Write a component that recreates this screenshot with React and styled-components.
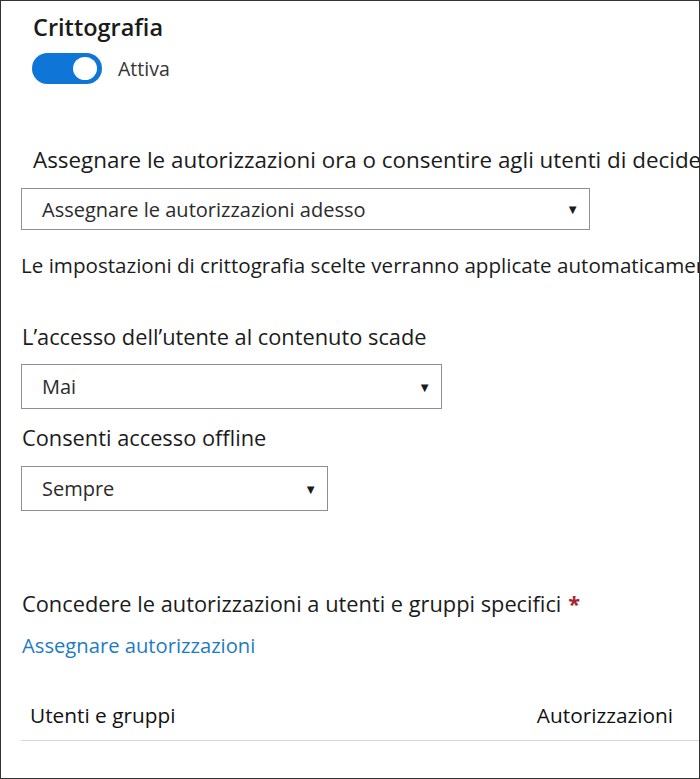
import React, { useState } from 'react';
import styled, { createGlobalStyle } from 'styled-components';

const GlobalStyle = createGlobalStyle`
  html, body {
    margin: 0;
    padding: 0;
    background: #ffffff;
  }
  body {
    font-family: 'Open Sans', 'Noto Sans', 'Liberation Sans', sans-serif;
    color: #1b1b1b;
  }
`;

const Frame = styled.div`
  box-sizing: border-box;
  width: 700px;
  height: 779px;
  border: 1px solid #333333;
  overflow: hidden;
  padding: 11px 0 0 20px;
  white-space: nowrap;
`;

const Heading = styled.h2`
  margin: 0 0 0 12px;
  font-size: 23.5px;
  line-height: 30px;
  font-weight: 600;
  color: #1b1b1b;
`;

const ToggleRow = styled.div`
  display: flex;
  align-items: center;
  gap: 16px;
  margin: 11px 0 0 11px;
`;

const Track = styled.button`
  position: relative;
  width: 70px;
  height: 31px;
  border: none;
  border-radius: 16px;
  padding: 0;
  background: ${(p) => (p.$on ? '#0f76d8' : '#c8c6c4')};
  cursor: pointer;
`;

const Knob = styled.span`
  position: absolute;
  top: 4px;
  left: ${(p) => (p.$on ? '41px' : '5px')};
  width: 24px;
  height: 23px;
  border-radius: 50%;
  background: #ffffff;
`;

const ToggleText = styled.span`
  font-size: 19.5px;
  color: #333333;
`;

const Label = styled.div`
  margin: ${(p) => p.$mt}px 0 0 ${(p) => p.$ml || 1}px;
  font-size: ${(p) => p.$size || 21.8}px;
  line-height: 26px;
  color: #1b1b1b;
`;

const Required = styled.span`
  color: #a4262c;
  font-weight: 700;
  margin-left: 7px;
`;

const Select = styled.div`
  box-sizing: border-box;
  display: flex;
  align-items: center;
  justify-content: space-between;
  width: ${(p) => p.$w}px;
  height: ${(p) => p.$h}px;
  margin-top: ${(p) => p.$mt}px;
  padding: 0 10px 0 20px;
  border: 1px solid #8f8f8f;
  background: #ffffff;
  font-size: 20px;
  color: #2b2b2b;
`;

const Caret = styled.span`
  font-size: 13px;
  color: #1b1b1b;
`;

const Info = styled.div`
  margin-top: 23px;
  font-size: 20.6px;
  line-height: 24px;
  color: #1b1b1b;
`;

const Link = styled.a`
  display: block;
  margin: 16px 0 0 1px;
  font-size: 20.2px;
  line-height: 24px;
  color: #1c7bc4;
  text-decoration: none;
`;

const TableHead = styled.div`
  display: flex;
  justify-content: space-between;
  width: 679px;
  box-sizing: border-box;
  margin-top: 45px;
  padding: 0 27px 12px 9px;
  border-bottom: 1px solid #d6d6d6;
  font-size: 20.8px;
  line-height: 26px;
  font-weight: 400;
  color: #111111;
`;

function Dropdown({ value, w, h, mt }) {
  return (
    <Select $w={w} $h={h} $mt={mt}>
      <span>{value}</span>
      <Caret>▼</Caret>
    </Select>
  );
}

export default function App() {
  const [on, setOn] = useState(true);
  return (
    <>
      <GlobalStyle />
      <Frame>
        <Heading>Crittografia</Heading>
        <ToggleRow>
          <Track $on={on} onClick={() => setOn(!on)}>
            <Knob $on={on} />
          </Track>
          <ToggleText>{on ? 'Attiva' : 'Disattiva'}</ToggleText>
        </ToggleRow>

        <Label $mt={63} $ml={12} $size={22.4}>
          Assegnare le autorizzazioni ora o consentire agli utenti di decidere
        </Label>
        <Dropdown value="Assegnare le autorizzazioni adesso" w={569} h={42} mt={15} />
        <Info>
          Le impostazioni di crittografia scelte verranno applicate automaticamente
        </Info>

        <Label $mt={47}>L’accesso dell’utente al contenuto scade</Label>
        <Dropdown value="Mai" w={421} h={45} mt={14} />

        <Label $mt={16}>Consenti accesso offline</Label>
        <Dropdown value="Sempre" w={307} h={45} mt={15} />

        <Label $mt={80}>
          Concedere le autorizzazioni a utenti e gruppi specifici
          <Required>*</Required>
        </Label>
        <Link href="#">Assegnare autorizzazioni</Link>

        <TableHead>
          <span>Utenti e gruppi</span>
          <span>Autorizzazioni</span>
        </TableHead>
      </Frame>
    </>
  );
}
